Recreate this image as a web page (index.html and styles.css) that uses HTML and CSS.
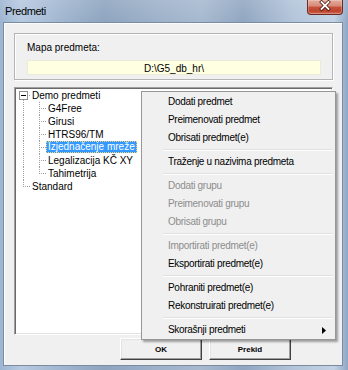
FILE: index.html
```html
<!DOCTYPE html>
<html>
<head>
<meta charset="utf-8">
<link rel="stylesheet" href="styles.css">
</head>
<body>
<div class="window">
  <div class="titlebar">
    <span class="title">Predmeti</span>
    <div class="close">
      <svg width="36" height="15" viewBox="0 0 36 15">
        <path d="M15 3 L22 10 M22 3 L15 10" stroke="#4a1a12" stroke-width="3.6" stroke-linecap="square" fill="none"/>
        <path d="M15 3 L22 10 M22 3 L15 10" stroke="#ffffff" stroke-width="2" stroke-linecap="square" fill="none"/>
      </svg>
    </div>
  </div>
  <div class="client">
    <div class="group">
      <div class="label">Mapa predmeta:</div>
      <div class="path">D:\G5_db_hr\</div>
    </div>
    <div class="tree">
      <div class="row"><span class="g exp"><span class="box"></span></span><span class="txt">Demo predmeti</span></div>
      <div class="row"><span class="g pipe"></span><span class="g tee"></span><span class="txt">G4Free</span></div>
      <div class="row"><span class="g pipe"></span><span class="g tee"></span><span class="txt">Girusi</span></div>
      <div class="row"><span class="g pipe"></span><span class="g tee"></span><span class="txt">HTRS96/TM</span></div>
      <div class="row"><span class="g pipe"></span><span class="g tee"></span><span class="txt sel">Izjednačenje mreže</span></div>
      <div class="row"><span class="g pipe"></span><span class="g tee"></span><span class="txt">Legalizacija KČ XY</span></div>
      <div class="row"><span class="g pipe"></span><span class="g ell"></span><span class="txt">Tahimetrija</span></div>
      <div class="row"><span class="g ell"></span><span class="txt">Standard</span></div>
    </div>
    <div class="buttons">
      <button class="btn">OK</button>
      <button class="btn">Prekid</button>
    </div>
  </div>
</div>
<div class="menu">
  <div class="mi">Dodati predmet</div>
  <div class="mi">Preimenovati predmet</div>
  <div class="mi">Obrisati predmet(e)</div>
  <div class="sep"></div>
  <div class="mi">Traženje u nazivima predmeta</div>
  <div class="sep"></div>
  <div class="mi dis">Dodati grupu</div>
  <div class="mi dis">Preimenovati grupu</div>
  <div class="mi dis">Obrisati grupu</div>
  <div class="sep"></div>
  <div class="mi dis">Importirati predmet(e)</div>
  <div class="mi">Eksportirati predmet(e)</div>
  <div class="sep"></div>
  <div class="mi">Pohraniti predmet(e)</div>
  <div class="mi">Rekonstruirati predmet(e)</div>
  <div class="sep"></div>
  <div class="mi sub"><span>Skorašnji predmeti</span><svg class="arrow" width="4" height="7" viewBox="0 0 4 7"><path d="M0 0 L4 3.5 L0 7 Z" fill="#000"/></svg></div>
</div>
</body>
</html>
```

FILE: styles.css
```css
* { box-sizing: border-box; }
html, body { margin: 0; padding: 0; }
body {
  width: 348px;
  height: 370px;
  overflow: hidden;
  position: relative;
  font-family: "Liberation Sans", Arial, sans-serif;
  font-size: 10px;
  color: #000;
  background:
    linear-gradient(to bottom, rgba(255,255,255,0.12), rgba(255,255,255,0) 22px),
    linear-gradient(90deg, #9db5d2 0%, #b6c9e0 6%, #a0b5cf 18%, #8ea4bf 30%, #9db1c9 45%, #a6b9cf 58%, #90a6c1 70%, #b2c4d9 84%, #c3d2e4 96%, #8fa7c4 100%);
}
.window {
  height: 370px;
  display: flex;
  flex-direction: column;
}
.titlebar {
  height: 22px;
  flex: none;
  display: flex;
  justify-content: space-between;
  align-items: flex-start;
  padding: 0 5px;
}
.title {
  margin-top: 5px;
  font-size: 11px;
  line-height: 12px;
  letter-spacing: -0.4px;
}
.close {
  width: 36px;
  height: 15px;
  border: 1px solid #6b2a20;
  border-top: none;
  border-radius: 0 0 4px 4px;
  background: linear-gradient(to bottom, #e4ac9d 0%, #d88a78 42%, #c4513b 52%, #c0432d 80%, #d0705a 100%);
  box-shadow: inset 0 0 0 1px rgba(255,255,255,0.25);
  display: flex;
}
.close svg { display: block; margin: -1px 0 0 -1px; }
.client {
  flex: 1;
  margin: 0 5px 4px 3px;
  border: 1px solid #7b8ca1;
  box-shadow: inset 1px 1px 0 #fbfcfd;
  background: #f0f0f0;
  display: flex;
  flex-direction: column;
}
.group {
  margin: 10px 9px 0 10px;
  height: 47px;
  border: 1px solid #b4b4b4;
  box-shadow: inset 1px 1px 0 #fff, 1px 1px 0 #fff;
  padding: 8px 11px 4px 12px;
  display: flex;
  flex-direction: column;
}
.label { line-height: 12px; height: 12px; }
.path {
  margin-top: 6px;
  height: 15px;
  line-height: 15px;
  background: #ffffe1;
  border: 1px solid #ececd6;
  text-align: center;
}
.tree {
  margin: 7px 9px 0 10px;
  height: 248px;
  flex: none;
  background: #fff;
  border: 1px solid;
  border-color: #a0a0a0 #ffffff #ffffff #a0a0a0;
  box-shadow: inset 1px 1px 0 #696969, inset -1px -1px 0 #e3e3e3;
  padding: 1px 0 0 1px;
  --v: repeating-linear-gradient(to bottom, #a0a0a0 0 1px, transparent 1px 2px);
  --h: repeating-linear-gradient(to right, #a0a0a0 0 1px, transparent 1px 2px);
}
.row {
  height: 13px;
  display: flex;
  align-items: flex-start;
}
.g { width: 16px; height: 13px; flex: none; }
.g.pipe { background: var(--v) 7px 0 / 1px 13px no-repeat; }
.g.tee { background: var(--v) 7px 0 / 1px 13px no-repeat, var(--h) 9px 6px / 6px 1px no-repeat; }
.g.ell { background: var(--v) 7px 0 / 1px 7px no-repeat, var(--h) 9px 6px / 6px 1px no-repeat; }
.g.exp {
  background: var(--v) 7px 11px / 1px 2px no-repeat, var(--h) 13px 6px / 2px 1px no-repeat;
  padding: 2px 0 0 3px;
}
.box {
  display: block;
  width: 9px;
  height: 9px;
  border: 1px solid #919191;
  background: linear-gradient(#000, #000) 1px 3px / 5px 1px no-repeat, #fff;
}
.txt { line-height: 13px; white-space: nowrap; }
.tree .sel {
  line-height: 12px;
  height: 12px;
  margin-left: -2px;
  padding: 0 2px;
  background: #3399ff;
  color: #fff;
  outline: 1px dotted #f3d57a;
  outline-offset: -1px;
}
.buttons {
  margin: 3px 0 0 116px;
  display: flex;
  gap: 7px;
}
.btn {
  width: 82px;
  height: 22px;
  margin: 0;
  padding: 0;
  font-family: "Liberation Sans", Arial, sans-serif;
  font-size: 8px;
  font-weight: bold;
  color: #000;
  background: #f0f0f0;
  border: 1px solid;
  border-color: #ffffff #404040 #404040 #ffffff;
  box-shadow: inset -1px -1px 0 #a0a0a0, inset 1px 1px 0 #e3e3e3;
}
.menu {
  position: absolute;
  left: 141px;
  top: 91px;
  width: 195px;
  padding-top: 1px;
  background: #f0f0f0;
  border: 1px solid #979797;
  box-shadow: 2px 2px 2px rgba(0,0,0,0.35);
  letter-spacing: -0.3px;
}
.mi {
  height: 18px;
  line-height: 18px;
  padding: 0 9px 0 26px;
  white-space: nowrap;
}
.mi.dis { color: #8d8d8d; }
.mi.sub {
  display: flex;
  justify-content: space-between;
  align-items: center;
}
.arrow { display: block; }
.sep {
  height: 2px;
  margin: 2px 2px 2px 21px;
  background: #e0e0e0;
  border-bottom: 1px solid #fff;
}
```
